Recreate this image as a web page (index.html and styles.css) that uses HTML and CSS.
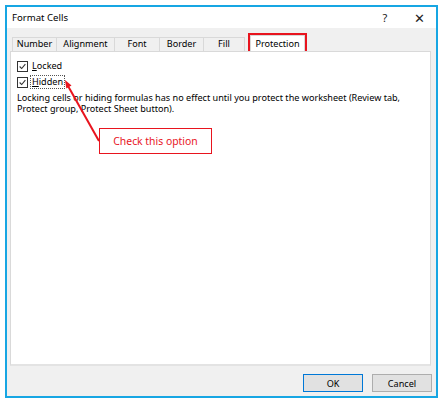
FILE: index.html
```html
<!DOCTYPE html>
<html lang="en">
<head>
  <meta charset="UTF-8" />
  <title>Format Cells</title>
  <link rel="stylesheet" href="styles.css">
</head>
<body>
  <div class="dialog">
    <div class="titlebar">
      <span class="title">Format Cells</span>
      <span class="ctl help">?</span>
      <span class="ctl close">&#x2715;</span>
    </div>

    <div class="tabs">
      <div class="tab w45">Number</div>
      <div class="tab w58">Alignment</div>
      <div class="tab w45">Font</div>
      <div class="tab w44">Border</div>
      <div class="tab w41">Fill</div>
      <div class="tab active">Protection</div>
    </div>

    <div class="panel">
      <label class="check">
        <span class="box"><svg viewBox="0 0 11 11"><path d="M2 5.5 L4.5 8 L9 2.5" /></svg></span>
        <span class="label"><u>L</u>ocked</span>
      </label>
      <label class="check">
        <span class="box"><svg viewBox="0 0 11 11"><path d="M2 5.5 L4.5 8 L9 2.5" /></svg></span>
        <span class="label focus"><u>H</u>idden</span>
      </label>
      <p class="note">Locking cells or hiding formulas has no effect until you protect the worksheet (Review tab, Protect group, Protect Sheet button).</p>
    </div>

    <div class="footer">
      <button class="default">OK</button>
      <button>Cancel</button>
    </div>

    <!-- annotation -->
    <svg class="arrow" width="429" height="389">
      <line x1="92" y1="134" x2="61" y2="79" />
      <polygon points="58,73 64.5,78.5 59.3,81.5" />
    </svg>
    <div class="callout">Check this option</div>
  </div>
</body>
</html>
```

FILE: styles.css
```css
body {
  margin: 0;
  background: #fff;
  font-family: "Noto Sans", "Open Sans", sans-serif;
  font-size: 9.1px;
  color: #000;
}
.dialog {
  position: relative;
  box-sizing: border-box;
  width: 433px;
  height: 393px;
  margin: 5px 0 0 5px;
  border: 2px solid #17a6e3;
  background: #f0f0f0;
  display: flex;
  flex-direction: column;
}
.titlebar {
  height: 21px;
  background: #fff;
  display: flex;
  align-items: center;
}
.title {
  padding-left: 5px;
  flex: 1;
  font-size: 9.6px;
}
.ctl {
  width: 34px;
  text-align: center;
  font-size: 11px;
  color: #222;
}
.close {
  font-size: 13px;
  font-weight: 300;
}
.tabs {
  height: 23px;
  box-sizing: border-box;
  padding: 7px 0 0 5px;
  display: flex;
  align-items: flex-end;
}
.tab {
  box-sizing: border-box;
  height: 14px;
  line-height: 12px;
  border: 1px solid #d9d9d9;
  border-bottom: none;
  border-left: none;
  text-align: center;
}
.tab:first-child {
  border-left: 1px solid #d9d9d9;
}
.w45 { width: 45px; }
.w58 { width: 58px; }
.w44 { width: 44px; }
.w41 { width: 41px; }
.tab.active {
  width: 55px;
  height: 16px;
  line-height: 15px;
  margin-left: 5px;
  background: #fff;
  border-left: 1px solid #d9d9d9;
  outline: 2px solid #e8141e;
}
.panel {
  height: 315px;
  box-sizing: border-box;
  margin: 0 5px 0 3px;
  padding: 6px 6px;
  background: #fff;
  border: 1px solid #d9d9d9;
  border-bottom: 2px solid #e3e3e3;
}
.check {
  display: flex;
  align-items: center;
  height: 16px;
}
.box {
  box-sizing: border-box;
  width: 11px;
  height: 11px;
  border: 1px solid #333;
  display: flex;
  margin-right: 3px;
}
.box svg {
  width: 9px;
  height: 9px;
}
.box path {
  fill: none;
  stroke: #333;
  stroke-width: 1.3;
}
.label {
  padding: 0 1px;
  line-height: 12px;
}
.focus {
  outline: 1px dotted #555;
}
.note {
  margin: 2px 0 0;
  line-height: 11px;
}
.footer {
  flex: 1;
  display: flex;
  justify-content: flex-end;
  align-items: flex-start;
  gap: 9px;
  padding: 8px 4px 0 0;
}
button {
  width: 60px;
  height: 18px;
  padding: 0;
  font-family: inherit;
  font-size: 9.1px;
  color: #000;
  background: #e1e1e1;
  border: 1px solid #adadad;
}
button.default {
  border-color: #0078d7;
}
.arrow {
  position: absolute;
  left: 0;
  top: 0;
  pointer-events: none;
}
.arrow line {
  stroke: #e8141e;
  stroke-width: 2;
}
.arrow polygon {
  fill: #e8141e;
}
.callout {
  position: absolute;
  left: 92px;
  top: 121px;
  width: 113px;
  height: 26px;
  box-sizing: border-box;
  border: 1px solid #e8141e;
  background: #fff;
  color: #e8141e;
  font-size: 10.4px;
  line-height: 24px;
  text-align: center;
}
```
